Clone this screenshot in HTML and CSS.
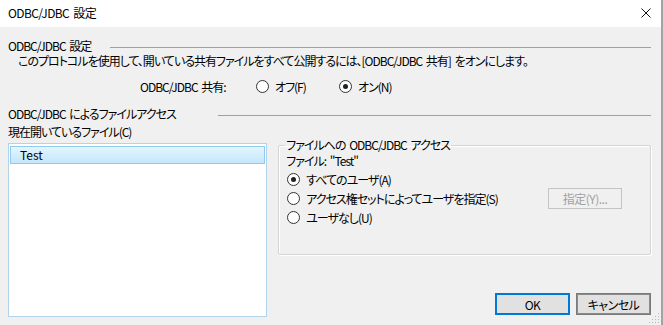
FILE: index.html
```html
<!DOCTYPE html>
<html lang="ja">
<head>
    <meta charset="UTF-8">
    <meta name="viewport" content="width=device-width, initial-scale=1.0">
    <title>ODBC/JDBC 設定</title>
    <link rel="stylesheet" href="styles.css">
</head>
<body>
    <div class="window">
        <div class="titlebar">
            <span class="title">ODBC/JDBC 設定</span>
            <span class="close">
                <svg width="10" height="10" viewBox="0 0 10 10">
                    <path d="M0.5 0.5 L9.5 9.5 M9.5 0.5 L0.5 9.5" stroke="#111" stroke-width="1" fill="none"/>
                </svg>
            </span>
        </div>

        <div class="content">
            <!-- 共有設定 -->
            <div class="section-head">
                <span class="head-label first">ODBC/JDBC 設定</span>
                <span class="rule"></span>
            </div>
            <p class="desc">このプロトコルを使用して、開いている共有ファイルをすべて公開するには、[ODBC/JDBC 共有] をオンにします。</p>
            <div class="share-row">
                <span class="share-label">ODBC/JDBC 共有:</span>
                <label class="radio share-opt"><span class="circle"></span>オフ(F)</label>
                <label class="radio share-opt checked"><span class="circle"></span>オン(N)</label>
            </div>

            <!-- ファイルアクセス -->
            <div class="section-head second">
                <span class="head-label wide">ODBC/JDBC によるファイルアクセス</span>
                <span class="rule"></span>
            </div>
            <div class="files-label">現在開いているファイル(C)</div>

            <div class="access">
                <ul class="listbox">
                    <li class="selected">Test</li>
                </ul>

                <div class="right">
                    <fieldset class="group">
                        <legend>ファイルへの ODBC/JDBC アクセス</legend>
                        <div class="file-name">ファイル: "Test"</div>
                        <div class="options">
                            <div class="option-list">
                                <label class="radio checked"><span class="circle"></span>すべてのユーザ(A)</label>
                                <label class="radio"><span class="circle"></span>アクセス権セットによってユーザを指定(S)</label>
                                <label class="radio"><span class="circle"></span>ユーザなし(U)</label>
                            </div>
                            <button class="btn assign" disabled>指定(Y)...</button>
                        </div>
                    </fieldset>

                    <div class="actions">
                        <button class="btn default">OK</button>
                        <button class="btn cancel">キャンセル</button>
                    </div>
                </div>
            </div>
        </div>
        <div class="grip"></div>
    </div>
</body>
</html>
```

FILE: styles.css
```css
/* 全体 */
body {
    margin: 0;
    background-color: #f0f0f0;
    font-family: "Noto Sans CJK JP", "Noto Sans", sans-serif;
    font-size: 12px;
    line-height: 16px;
    letter-spacing: -1px;
    word-spacing: 2px;
    color: #000;
    font-feature-settings: "palt";
}

.window {
    position: relative;
    width: 661px;
    height: 325px;
    border-right: 2px solid #a3a3a3;
    background-color: #f0f0f0;
    overflow: hidden;
}

/* タイトルバー */
.titlebar {
    height: 27px;
    background-color: #fff;
    display: flex;
    align-items: center;
    padding-left: 8px;
}

.title {
    flex: 1;
    margin-top: -1px;
    letter-spacing: -0.6px;
}

.close {
    width: 10px;
    height: 10px;
    margin-right: 10px;
    margin-top: -2px;
    display: flex;
}

/* 本体 */
.content {
    padding: 0 10px 0 8px;
}

.section-head {
    display: flex;
    align-items: center;
    height: 14px;
    line-height: 14px;
    margin-top: 12px;
}

.section-head.second {
    margin-top: 11px;
}

.head-label.first {
    width: 102px;
}

.head-label.wide {
    width: 210px;
}

.rule {
    flex: 1;
    border-top: 1px solid #a0a0a0;
    margin-top: 2px;
}

.desc {
    margin: 0;
    padding-left: 10px;
    white-space: nowrap;
}

.share-row {
    display: flex;
    align-items: center;
    margin-top: 8px;
    padding-left: 132px;
}

.share-label {
    width: 116px;
}

.share-opt {
    width: 83px;
}

/* ラジオボタン */
.radio {
    display: flex;
    align-items: center;
    height: 19px;
}

.circle {
    width: 11px;
    height: 11px;
    border: 1px solid #333;
    border-radius: 50%;
    background-color: #fff;
    margin-right: 6px;
    display: flex;
    align-items: center;
    justify-content: center;
}

.radio.checked .circle::after {
    content: "";
    width: 5px;
    height: 5px;
    border-radius: 50%;
    background-color: #222;
}

.files-label {
    margin-top: 3px;
}

/* ファイル一覧 */
.access {
    display: flex;
    margin-top: 3px;
}

.listbox {
    list-style: none;
    margin: 0;
    width: 256px;
    padding: 2px 1px 0 1px;
    box-sizing: content-box;
    border: 1px solid #b1d3ec;
    background-color: #fff;
    height: 170px;
}

.listbox li {
    height: 16px;
    padding-left: 9px;
    border: 1px solid #8fcbef;
    background: linear-gradient(#e4f5fe, #c4e6fb);
    letter-spacing: 0;
}

.right {
    width: 374px;
    margin-left: 11px;
    margin-top: -6px;
    display: flex;
    flex-direction: column;
}

/* グループボックス */
.group {
    margin: 0;
    padding: 0 7px 27px 7px;
    border: 1px solid #d5d5d5;
    box-shadow: inset 1px 1px 0 #fff, 1px 1px 0 #fff;
    border-radius: 2px;
    min-width: 0;
}

.group legend {
    padding: 0 1px;
    margin-left: -1px;
}

.file-name {
    height: 16px;
}

.options {
    display: flex;
    align-items: center;
    margin-top: 1px;
}

.option-list {
    flex: 1;
    padding-left: 1px;
}

/* ボタン */
.btn {
    font-family: inherit;
    font-size: 12px;
    letter-spacing: -0.5px;
    font-feature-settings: "palt";
    width: 75px;
    height: 22px;
    padding: 0;
    background-color: #e1e1e1;
    border: 1px solid #adadad;
    color: #000;
}

.assign {
    width: 74px;
    height: 21px;
    margin-right: 21px;
    background-color: #f0f0f0;
    border-color: #c4c4c4;
    color: #a0a0a0;
}

.actions {
    margin-top: auto;
    margin-bottom: 2px;
    display: flex;
    justify-content: flex-end;
    gap: 6px;
}

.btn.default {
    border-color: #0078d7;
    box-shadow: inset 0 0 0 1px #0078d7;
}

.btn.cancel {
    border-color: #7a7a7a;
    box-shadow: inset 0 0 0 1px #8a8a8a;
}

/* サイズ変更グリップ */
.grip {
    position: absolute;
    right: 2px;
    bottom: 2px;
    width: 11px;
    height: 11px;
    background-image: radial-gradient(circle, #b8b8b8 0.8px, transparent 1px);
    background-size: 3px 3px;
    clip-path: polygon(100% 0, 100% 100%, 0 100%);
}
```
